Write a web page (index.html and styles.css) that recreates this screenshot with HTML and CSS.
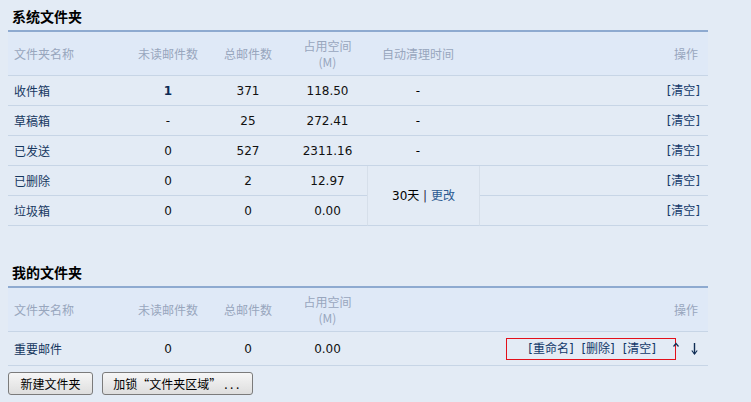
FILE: index.html
```html
<!DOCTYPE html>
<html lang="zh-CN">
<head>
<meta charset="utf-8">
<title>文件夹管理</title>
<link rel="stylesheet" href="styles.css">
</head>
<body>
<div class="page">
  <h2 class="sec-title">系统文件夹</h2>
  <table class="grid">
    <colgroup>
      <col class="c-name"><col class="c-unread"><col class="c-total"><col class="c-size"><col class="c-auto"><col class="c-act">
    </colgroup>
    <thead>
      <tr>
        <th class="name">文件夹名称</th>
        <th>未读邮件数</th>
        <th>总邮件数</th>
        <th>占用空间<br>(M)</th>
        <th class="auto">自动清理时间</th>
        <th class="act">操作</th>
      </tr>
    </thead>
    <tbody>
      <tr>
        <td class="name">收件箱</td>
        <td class="num"><b class="unread">1</b></td>
        <td class="num">371</td>
        <td class="num">118.50</td>
        <td class="auto">-</td>
        <td class="act"><a class="op">[清空]</a></td>
      </tr>
      <tr>
        <td class="name">草稿箱</td>
        <td class="num">-</td>
        <td class="num">25</td>
        <td class="num">272.41</td>
        <td class="auto">-</td>
        <td class="act"><a class="op">[清空]</a></td>
      </tr>
      <tr>
        <td class="name">已发送</td>
        <td class="num">0</td>
        <td class="num">527</td>
        <td class="num">2311.16</td>
        <td class="auto">-</td>
        <td class="act"><a class="op">[清空]</a></td>
      </tr>
      <tr>
        <td class="name">已删除</td>
        <td class="num">0</td>
        <td class="num">2</td>
        <td class="num">12.97</td>
        <td class="clean" rowspan="2">30天 <span class="sep">|</span> <a class="change">更改</a></td>
        <td class="act"><a class="op">[清空]</a></td>
      </tr>
      <tr>
        <td class="name">垃圾箱</td>
        <td class="num">0</td>
        <td class="num">0</td>
        <td class="num">0.00</td>
        <td class="act"><a class="op">[清空]</a></td>
      </tr>
    </tbody>
  </table>

  <h2 class="sec-title second">我的文件夹</h2>
  <table class="grid">
    <colgroup>
      <col class="c-name"><col class="c-unread"><col class="c-total"><col class="c-size"><col class="c-auto"><col class="c-act">
    </colgroup>
    <thead>
      <tr>
        <th class="name">文件夹名称</th>
        <th>未读邮件数</th>
        <th>总邮件数</th>
        <th>占用空间<br>(M)</th>
        <th></th>
        <th class="act">操作</th>
      </tr>
    </thead>
    <tbody>
      <tr class="tall">
        <td class="name">重要邮件</td>
        <td class="num">0</td>
        <td class="num">0</td>
        <td class="num">0.00</td>
        <td></td>
        <td class="act act2">
          <span class="links"><a class="op">[重命名]</a> <a class="op">[删除]</a> <a class="op">[清空]</a></span><svg class="up" width="6" height="12" viewBox="0 0 6 12"><path d="M0.5 4.5 L3 1.5 L5.5 4.5" fill="none" stroke="#0f2d55" stroke-width="1.2"/></svg><svg class="down" width="7" height="12" viewBox="0 0 7 12"><path d="M3.5 0 V11" stroke="#0f2d55" stroke-width="1.4"/><path d="M0.8 7.5 L3.5 11 L6.2 7.5" fill="none" stroke="#0f2d55" stroke-width="1.2"/></svg>
        </td>
      </tr>
    </tbody>
  </table>

  <div class="buttons">
    <button class="btn btn-new">新建文件夹</button>
    <button class="btn btn-lock">加锁“文件夹区域”<span class="dots">...</span></button>
  </div>
</div>
</body>
</html>
```

FILE: styles.css
```css
html, body {
  margin: 0;
  padding: 0;
  background: #e3ebf5;
}

body {
  font-family: "DejaVu Sans", "Noto Sans CJK SC", sans-serif;
  font-size: 12px;
  color: #000;
}

.page {
  padding: 0 8px;
  width: 700px;
}

.sec-title {
  margin: 0;
  padding: 6px 4px 4px;
  font-family: "Noto Sans CJK SC", sans-serif;
  font-size: 14px;
  line-height: 20px;
  font-weight: bold;
  color: #000;
}

.sec-title.second {
  margin-top: 30px;
  padding-bottom: 4px;
}

.grid {
  width: 700px;
  table-layout: fixed;
  border-collapse: separate;
  border-spacing: 0;
  border-top: 2px solid #8eaad0;
}

.c-name { width: 120px; }
.c-unread { width: 80px; }
.c-total { width: 80px; }
.c-size { width: 79px; }
.c-auto { width: 113px; }
.c-act { width: 228px; }

.grid th {
  background: #dfe9f7;
  color: #98a6bd;
  font-family: "Noto Sans CJK SC", sans-serif;
  font-weight: normal;
  font-size: 12px;
  line-height: 16px;
  height: 44px;
  padding: 0;
  text-align: center;
  border-bottom: 1px solid #c7d5e6;
  box-sizing: border-box;
}

.grid td {
  height: 30px;
  padding: 0;
  text-align: center;
  border-bottom: 1px solid #c7d5e6;
  box-sizing: border-box;
  line-height: 16px;
}

.grid td.num {
  color: #111;
}

.grid .name {
  text-align: left;
  padding-left: 6px;
}

.grid td.name {
  color: #16375f;
  font-family: "Noto Sans CJK SC", sans-serif;
}

.grid .auto {
  padding-right: 11px;
}

.grid th.act {
  text-align: right;
  padding-right: 10px;
}

.grid td.act {
  text-align: right;
  padding-right: 8px;
}

.unread {
  color: #0d2b55;
}

.op {
  color: #123869;
  text-decoration: none;
}

.grid td.clean {
  border-left: 1px solid #d6dfea;
  border-right: 1px solid #d6dfea;
  padding-bottom: 1px;
}

.sep {
  color: #2a2a4a;
}

.change {
  color: #2b5a92;
  font-family: "Noto Sans CJK SC", sans-serif;
}

.grid tr.tall td {
  height: 34px;
}

.grid td.act2 {
  padding-right: 10px;
  white-space: nowrap;
}

.links {
  display: inline-block;
  vertical-align: middle;
  height: 20px;
  line-height: 20px;
  padding: 0 19px 0 21px;
  border: 1px solid #e3101a;
  word-spacing: 4px;
}

.up {
  display: inline-block;
  vertical-align: middle;
  margin-left: -3px;
  margin-bottom: 2px;
}

.down {
  display: inline-block;
  vertical-align: middle;
  margin-left: 12px;
}

.buttons {
  display: flex;
  gap: 9px;
  margin-top: 6px;
}

.btn {
  height: 23px;
  padding: 0;
  border: 1px solid #7b7b7b;
  border-radius: 3px;
  background: linear-gradient(#f6f6f6, #dedede);
  font-family: "Noto Sans CJK SC", sans-serif;
  font-size: 12px;
  color: #000;
  line-height: 20px;
}

.btn-new {
  width: 85px;
}

.btn-lock {
  width: 151px;
}

.dots {
  letter-spacing: 2.5px;
  margin-left: 3px;
}
```
